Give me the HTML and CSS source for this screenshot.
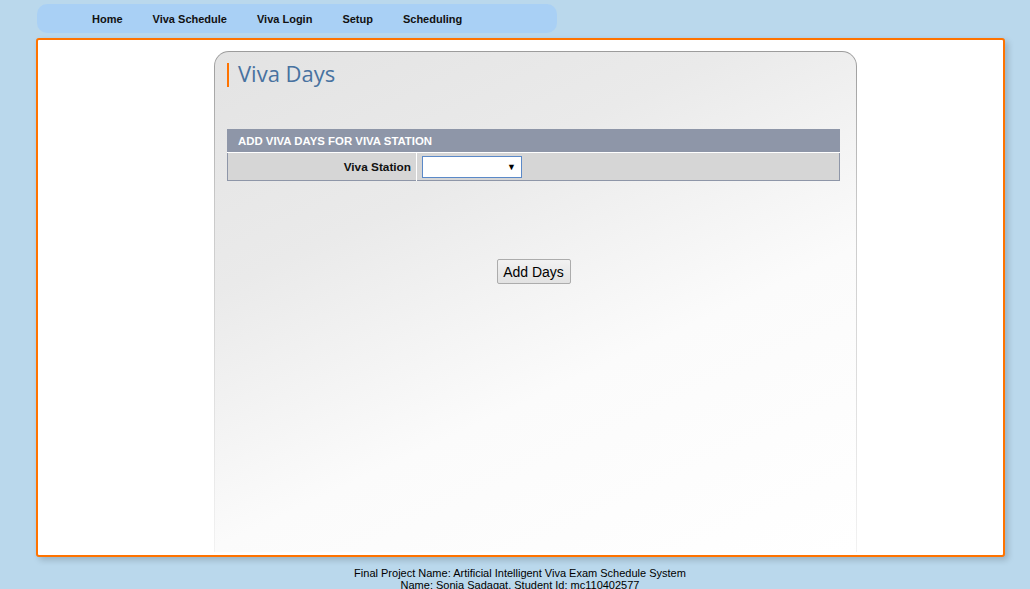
FILE: index.html
```html
<!DOCTYPE html>
<html>
<head>
<meta charset="utf-8">
<title>Viva Days</title>
<link rel="stylesheet" href="styles.css">
</head>
<body>
<nav class="menu">
  <a class="menu-item" href="#">Home</a>
  <a class="menu-item" href="#">Viva Schedule</a>
  <a class="menu-item" href="#">Viva Login</a>
  <a class="menu-item" href="#">Setup</a>
  <a class="menu-item" href="#">Scheduling</a>
</nav>
<main class="container">
  <section class="panel-frame">
    <div class="panel">
      <h1 class="title">Viva Days</h1>
      <table class="form-table">
        <tr><th colspan="2" class="form-head">ADD VIVA DAYS FOR VIVA STATION</th></tr>
        <tr>
          <td class="label">Viva Station</td>
          <td class="field"><div class="select"><span class="arrow">▼</span></div></td>
        </tr>
      </table>
      <div class="actions"><button class="btn">Add Days</button></div>
    </div>
  </section>
</main>
<footer class="footer">
  <div>Final Project Name: Artificial Intelligent Viva Exam Schedule System</div>
  <div>Name: Sonia Sadaqat, Student Id: mc110402577</div>
</footer>
</body>
</html>
```

FILE: styles.css
```css
html, body {
  margin: 0;
  padding: 0;
  background: #bad8ec;
  font-family: "Liberation Sans", Arial, sans-serif;
  height: 589px;
  overflow: hidden;
}
.menu {
  margin: 4px 0 0 37px;
  width: 520px;
  height: 29px;
  background: #a9d0f5;
  border-radius: 10px;
  display: flex;
  align-items: center;
  padding-left: 40px;
  box-sizing: border-box;
}
.menu-item {
  font-size: 11px;
  font-weight: bold;
  color: #111;
  text-decoration: none;
  padding: 0 15px;
  line-height: 30px;
}
.container {
  margin: 5px 0 0 36px;
  width: 969px;
  height: 519px;
  box-sizing: border-box;
  background: #fff;
  border: 2px solid #ff7300;
  border-radius: 3px;
  box-shadow: 3px 3px 6px rgba(0,0,0,0.18);
  padding: 11px 0 0 176px;
}
.panel-frame {
  width: 643px;
  height: 501px;
  box-sizing: border-box;
  padding: 1px 1px 0 1px;
  border-radius: 15px 15px 0 0;
  background: linear-gradient(to bottom, #9c9c9c 0%, #c8c8c8 30%, #f2f2f2 100%);
}
.panel {
  height: 100%;
  border-radius: 14px 14px 0 0;
  background: linear-gradient(155deg, #e3e3e3 0%, #eaeaea 30%, #fbfbfb 62%, #ffffff 100%);
  padding: 11px 16px 0 12px;
  box-sizing: border-box;
}
.title {
  margin: 0;
  border-left: 2px solid #ff7300;
  padding-left: 9px;
  height: 24px;
  line-height: 21px;
  font-family: "Open Sans", "DejaVu Sans", sans-serif;
  font-weight: normal;
  font-size: 22px;
  color: #4872a0;
}
.form-table {
  margin-top: 42px;
  width: 613px;
  border-collapse: collapse;
  border: 1px solid #8e96a8;
}
.form-head {
  background: #8e96a8;
  color: #fff;
  font-size: 11.4px;
  font-weight: bold;
  text-align: left;
  padding: 0 10px;
  height: 22px;
  border-bottom: 1px solid #fff;
}
.label, .field {
  background: #d6d6d6;
  height: 27px;
  padding: 0;
}
.label {
  width: 183px;
  text-align: right;
  font-size: 11.8px;
  font-weight: bold;
  color: #111;
  padding-right: 5px;
  border-right: 1px solid #fff;
}
.field {
  padding-left: 5px;
}
.select {
  width: 100px;
  height: 22px;
  box-sizing: border-box;
  border: 1px solid #5b89c8;
  background: #fff;
  display: flex;
  align-items: center;
  justify-content: flex-end;
  padding-right: 5px;
}
.arrow {
  font-size: 9px;
  color: #000;
}
.actions {
  width: 613px;
  display: flex;
  justify-content: center;
  margin-top: 78px;
}
.btn {
  width: 74px;
  height: 25px;
  font-family: "Liberation Sans", Arial, sans-serif;
  font-size: 14px;
  color: #000;
  background: linear-gradient(#f2f2f2, #e2e2e2);
  border: 1px solid #acacac;
  border-radius: 2px;
  padding: 0;
}
.footer {
  text-align: center;
  font-size: 11px;
  line-height: 12px;
  color: #000;
  margin-top: 10px;
  padding-left: 10px;
}
```
